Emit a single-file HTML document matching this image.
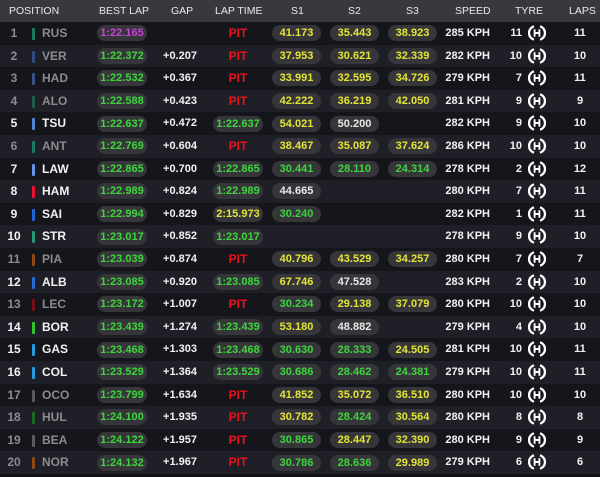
<!DOCTYPE html>
<html><head><meta charset="utf-8"><style>
*{margin:0;padding:0;box-sizing:border-box}
body{width:600px;height:477px;background:#111118;font-family:"Liberation Sans",sans-serif;font-weight:bold;overflow:hidden;position:relative}
.hd{position:absolute;left:0;top:0;width:600px;height:22px;background:#38383e;color:#e8e8ec;font-size:10.5px;font-weight:normal}
.hd span{position:absolute;top:5px}
.r{position:relative;width:600px;height:22.6px;background:#15151c;font-size:11px;color:#f2f2f2}
.r:nth-child(even){background:#1f1f27}
.r>*{position:absolute;top:4px;line-height:15px}
.p{left:0;width:28px;text-align:center;font-size:12px}
.b{left:32px;top:6px;width:3px;height:12px;border-radius:1px}
.n{left:42px;font-size:12px}
.d .p,.d .n{color:#8b8b90}
.pl{height:16px;line-height:16px;top:3.3px;background:#36363a;border-radius:8px;text-align:center;font-weight:bold;font-size:11px}
.bl{left:97px;width:50px;color:#3fd43f}
.g{left:160px;width:40px;text-align:center;font-weight:bold}
.lt{left:213px;width:50px;color:#3fd43f}
.pit{left:213px;width:50px;text-align:center;color:#e8141b;font-size:12px}
.s1{left:272px;width:49px}.s2{left:330px;width:49px}.s3{left:388px;width:49px}
.G{color:#3fd43f}.Y{color:#e4e437}.W{color:#e8e8e8}.P{color:#c543d8}
.sp{left:440px;width:50px;text-align:right;font-weight:bold}
.tn{left:500px;width:22px;text-align:right;font-weight:bold}
.ti{left:528px;top:2px}
.lp{left:565px;width:30px;text-align:center;font-weight:bold}
</style></head><body>
<div class="hd"><span style="left:9px">POSITION</span><span style="left:99px">BEST LAP</span><span style="left:171px">GAP</span><span style="left:215px">LAP TIME</span><span style="left:291px">S1</span><span style="left:348px">S2</span><span style="left:406px">S3</span><span style="left:455px">SPEED</span><span style="left:515px">TYRE</span><span style="left:569px">LAPS</span></div>
<svg width="0" height="0" style="position:absolute"><defs><g id="t"><path d="M6 2.3 A7 7 0 0 0 6 15.7 M12 2.3 A7 7 0 0 1 12 15.7" fill="none" stroke="#fff" stroke-width="2.3"/><path d="M6.6 5.2v7.6M11.4 5.2v7.6M6.6 9h4.8" stroke="#fff" stroke-width="1.9"/></g></defs></svg>
<div style="position:absolute;top:22px;left:0">
<div class="r d"><span class="p">1</span><i class="b" style="background:#1a7a62"></i><span class="n">RUS</span><span class="pl bl P">1:22.165</span><span class="g"></span><span class="pit">PIT</span><span class="pl s1 Y">41.173</span><span class="pl s2 Y">35.443</span><span class="pl s3 Y">38.923</span><span class="sp">285 KPH</span><span class="tn">11</span><svg class="ti" width="18" height="18"><use href="#t"/></svg><span class="lp">11</span></div>
<div class="r d"><span class="p">2</span><i class="b" style="background:#2f4c86"></i><span class="n">VER</span><span class="pl bl">1:22.372</span><span class="g">+0.207</span><span class="pit">PIT</span><span class="pl s1 Y">37.953</span><span class="pl s2 Y">30.621</span><span class="pl s3 Y">32.339</span><span class="sp">282 KPH</span><span class="tn">10</span><svg class="ti" width="18" height="18"><use href="#t"/></svg><span class="lp">10</span></div>
<div class="r d"><span class="p">3</span><i class="b" style="background:#3a4f8a"></i><span class="n">HAD</span><span class="pl bl">1:22.532</span><span class="g">+0.367</span><span class="pit">PIT</span><span class="pl s1 Y">33.991</span><span class="pl s2 Y">32.595</span><span class="pl s3 Y">34.726</span><span class="sp">279 KPH</span><span class="tn">7</span><svg class="ti" width="18" height="18"><use href="#t"/></svg><span class="lp">11</span></div>
<div class="r d"><span class="p">4</span><i class="b" style="background:#1d5f48"></i><span class="n">ALO</span><span class="pl bl">1:22.588</span><span class="g">+0.423</span><span class="pit">PIT</span><span class="pl s1 Y">42.222</span><span class="pl s2 Y">36.219</span><span class="pl s3 Y">42.050</span><span class="sp">281 KPH</span><span class="tn">9</span><svg class="ti" width="18" height="18"><use href="#t"/></svg><span class="lp">9</span></div>
<div class="r"><span class="p">5</span><i class="b" style="background:#4f82d8"></i><span class="n">TSU</span><span class="pl bl">1:22.637</span><span class="g">+0.472</span><span class="pl lt">1:22.637</span><span class="pl s1 Y">54.021</span><span class="pl s2 W">50.200</span><span class="sp">282 KPH</span><span class="tn">9</span><svg class="ti" width="18" height="18"><use href="#t"/></svg><span class="lp">10</span></div>
<div class="r d"><span class="p">6</span><i class="b" style="background:#1a7a62"></i><span class="n">ANT</span><span class="pl bl">1:22.769</span><span class="g">+0.604</span><span class="pit">PIT</span><span class="pl s1 Y">38.467</span><span class="pl s2 Y">35.087</span><span class="pl s3 Y">37.624</span><span class="sp">286 KPH</span><span class="tn">10</span><svg class="ti" width="18" height="18"><use href="#t"/></svg><span class="lp">10</span></div>
<div class="r"><span class="p">7</span><i class="b" style="background:#6692e8"></i><span class="n">LAW</span><span class="pl bl">1:22.865</span><span class="g">+0.700</span><span class="pl lt">1:22.865</span><span class="pl s1 G">30.441</span><span class="pl s2 G">28.110</span><span class="pl s3 G">24.314</span><span class="sp">278 KPH</span><span class="tn">2</span><svg class="ti" width="18" height="18"><use href="#t"/></svg><span class="lp">12</span></div>
<div class="r"><span class="p">8</span><i class="b" style="background:#e8102a"></i><span class="n">HAM</span><span class="pl bl">1:22.989</span><span class="g">+0.824</span><span class="pl lt">1:22.989</span><span class="pl s1 W">44.665</span><span class="sp">280 KPH</span><span class="tn">7</span><svg class="ti" width="18" height="18"><use href="#t"/></svg><span class="lp">11</span></div>
<div class="r"><span class="p">9</span><i class="b" style="background:#1e64d8"></i><span class="n">SAI</span><span class="pl bl">1:22.994</span><span class="g">+0.829</span><span class="pl lt Y">2:15.973</span><span class="pl s1 G">30.240</span><span class="sp">282 KPH</span><span class="tn">1</span><svg class="ti" width="18" height="18"><use href="#t"/></svg><span class="lp">11</span></div>
<div class="r"><span class="p">10</span><i class="b" style="background:#229971"></i><span class="n">STR</span><span class="pl bl">1:23.017</span><span class="g">+0.852</span><span class="pl lt">1:23.017</span><span class="sp">278 KPH</span><span class="tn">9</span><svg class="ti" width="18" height="18"><use href="#t"/></svg><span class="lp">10</span></div>
<div class="r d"><span class="p">11</span><i class="b" style="background:#8a4a12"></i><span class="n">PIA</span><span class="pl bl">1:23.039</span><span class="g">+0.874</span><span class="pit">PIT</span><span class="pl s1 Y">40.796</span><span class="pl s2 Y">43.529</span><span class="pl s3 Y">34.257</span><span class="sp">280 KPH</span><span class="tn">7</span><svg class="ti" width="18" height="18"><use href="#t"/></svg><span class="lp">7</span></div>
<div class="r"><span class="p">12</span><i class="b" style="background:#2a6ad8"></i><span class="n">ALB</span><span class="pl bl">1:23.085</span><span class="g">+0.920</span><span class="pl lt">1:23.085</span><span class="pl s1 Y">67.746</span><span class="pl s2 W">47.528</span><span class="sp">283 KPH</span><span class="tn">2</span><svg class="ti" width="18" height="18"><use href="#t"/></svg><span class="lp">10</span></div>
<div class="r d"><span class="p">13</span><i class="b" style="background:#7a0f1a"></i><span class="n">LEC</span><span class="pl bl">1:23.172</span><span class="g">+1.007</span><span class="pit">PIT</span><span class="pl s1 G">30.234</span><span class="pl s2 Y">29.138</span><span class="pl s3 Y">37.079</span><span class="sp">280 KPH</span><span class="tn">10</span><svg class="ti" width="18" height="18"><use href="#t"/></svg><span class="lp">10</span></div>
<div class="r"><span class="p">14</span><i class="b" style="background:#2fc42f"></i><span class="n">BOR</span><span class="pl bl">1:23.439</span><span class="g">+1.274</span><span class="pl lt">1:23.439</span><span class="pl s1 Y">53.180</span><span class="pl s2 W">48.882</span><span class="sp">279 KPH</span><span class="tn">4</span><svg class="ti" width="18" height="18"><use href="#t"/></svg><span class="lp">10</span></div>
<div class="r"><span class="p">15</span><i class="b" style="background:#2a9ae0"></i><span class="n">GAS</span><span class="pl bl">1:23.468</span><span class="g">+1.303</span><span class="pl lt">1:23.468</span><span class="pl s1 G">30.630</span><span class="pl s2 G">28.333</span><span class="pl s3 Y">24.505</span><span class="sp">281 KPH</span><span class="tn">10</span><svg class="ti" width="18" height="18"><use href="#t"/></svg><span class="lp">11</span></div>
<div class="r"><span class="p">16</span><i class="b" style="background:#2a9ae0"></i><span class="n">COL</span><span class="pl bl">1:23.529</span><span class="g">+1.364</span><span class="pl lt">1:23.529</span><span class="pl s1 G">30.686</span><span class="pl s2 G">28.462</span><span class="pl s3 G">24.381</span><span class="sp">279 KPH</span><span class="tn">10</span><svg class="ti" width="18" height="18"><use href="#t"/></svg><span class="lp">11</span></div>
<div class="r d"><span class="p">17</span><i class="b" style="background:#5a5a60"></i><span class="n">OCO</span><span class="pl bl">1:23.799</span><span class="g">+1.634</span><span class="pit">PIT</span><span class="pl s1 Y">41.852</span><span class="pl s2 Y">35.072</span><span class="pl s3 Y">36.510</span><span class="sp">280 KPH</span><span class="tn">10</span><svg class="ti" width="18" height="18"><use href="#t"/></svg><span class="lp">10</span></div>
<div class="r d"><span class="p">18</span><i class="b" style="background:#1a6a20"></i><span class="n">HUL</span><span class="pl bl">1:24.100</span><span class="g">+1.935</span><span class="pit">PIT</span><span class="pl s1 Y">30.782</span><span class="pl s2 G">28.424</span><span class="pl s3 Y">30.564</span><span class="sp">280 KPH</span><span class="tn">8</span><svg class="ti" width="18" height="18"><use href="#t"/></svg><span class="lp">8</span></div>
<div class="r d"><span class="p">19</span><i class="b" style="background:#5a5a60"></i><span class="n">BEA</span><span class="pl bl">1:24.122</span><span class="g">+1.957</span><span class="pit">PIT</span><span class="pl s1 G">30.865</span><span class="pl s2 Y">28.447</span><span class="pl s3 Y">32.390</span><span class="sp">280 KPH</span><span class="tn">9</span><svg class="ti" width="18" height="18"><use href="#t"/></svg><span class="lp">9</span></div>
<div class="r d"><span class="p">20</span><i class="b" style="background:#8a4a12"></i><span class="n">NOR</span><span class="pl bl">1:24.132</span><span class="g">+1.967</span><span class="pit">PIT</span><span class="pl s1 G">30.786</span><span class="pl s2 G">28.636</span><span class="pl s3 Y">29.989</span><span class="sp">279 KPH</span><span class="tn">6</span><svg class="ti" width="18" height="18"><use href="#t"/></svg><span class="lp">6</span></div>
</div>
</body></html>
